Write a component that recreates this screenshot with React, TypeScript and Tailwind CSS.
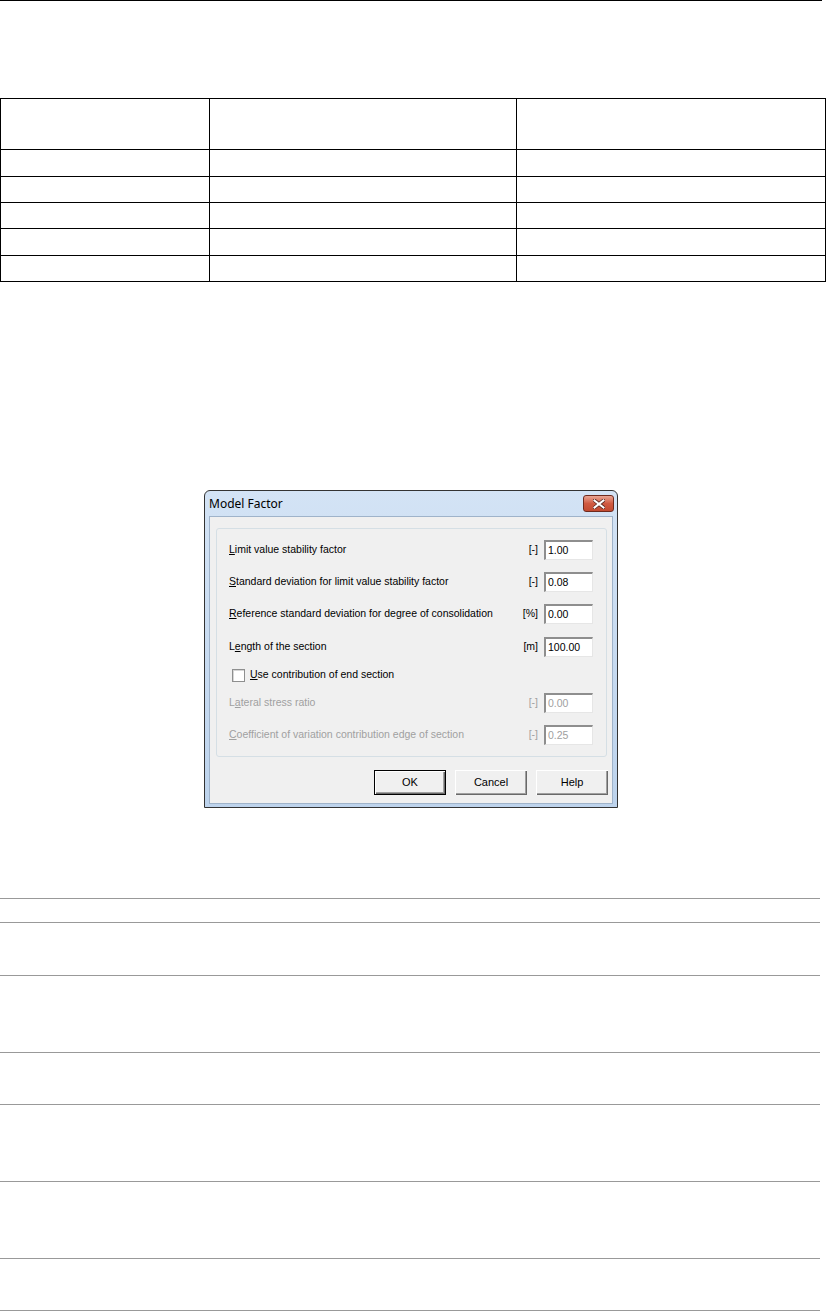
import React from "react";

const rows = [
  { label: "Limit value stability factor", key: "L", unit: "[-]", value: "1.00" },
  { label: "Standard deviation for limit value stability factor", key: "S", unit: "[-]", value: "0.08" },
  { label: "Reference standard deviation for degree of consolidation", key: "R", unit: "[%]", value: "0.00" },
  { label: "Length of the section", key: "e", unit: "[m]", value: "100.00" },
];

const disabledRows = [
  { label: "Lateral stress ratio", key: "a", unit: "[-]", value: "0.00" },
  { label: "Coefficient of variation contribution edge of section", key: "C", unit: "[-]", value: "0.25" },
];

// underline the mnemonic letter like a win32 label
function Mnemonic({ text, letter }: { text: string; letter: string }) {
  const i = text.indexOf(letter);
  if (i < 0) return <>{text}</>;
  return (
    <>
      {text.slice(0, i)}
      <span className="underline underline-offset-[1px]">{text[i]}</span>
      {text.slice(i + 1)}
    </>
  );
}

function Field({ label, letter, unit, value, disabled }: { label: string; letter: string; unit: string; value: string; disabled?: boolean }) {
  return (
    <div className={`flex items-center h-[20px] ${disabled ? "text-[#a0a0a0]" : "text-black"}`}>
      <span className="flex-1"><Mnemonic text={label} letter={letter} /></span>
      <span className="mr-[6px]">{unit}</span>
      <div className="w-[49px] h-[20px] bg-white border-t-2 border-l-2 border-t-[#8e8e8e] border-l-[#8e8e8e] border-r border-b border-r-[#e6e6e6] border-b-[#e6e6e6] flex items-center pl-[2px]">
        {value}
      </div>
    </div>
  );
}

function Button({ children, primary }: { children: React.ReactNode; primary?: boolean }) {
  return (
    <div className={`w-[72px] h-[25px] flex items-center justify-center bg-[#f0f0f0] ${primary ? "border border-black shadow-[inset_1px_1px_0_#fff,inset_-1px_-1px_0_#696969,inset_-2px_-2px_0_#a0a0a0]" : "shadow-[inset_1px_1px_0_#fff,inset_-1px_-1px_0_#696969,inset_-2px_-2px_0_#a0a0a0]"}`}>
      {children}
    </div>
  );
}

function ModelFactorDialog() {
  return (
    <div className="ml-[204px] w-[414px] h-[318px] border border-[#333] rounded-t-[6px] bg-gradient-to-b from-[#d3e3f5] to-[#bdd3ec] flex flex-col px-[4px] pb-[3px] overflow-hidden">
      <div className="h-[25px] flex items-start justify-between pt-[4px]">
        <span className="text-[12px] leading-[17px] text-black" style={{ fontFamily: '"Noto Sans", "Liberation Sans", sans-serif' }}>Model Factor</span>
        <div className="w-[31px] h-[17px] rounded-[3px] border border-[#6e2a1e] bg-gradient-to-b from-[#e8a493] via-[#d05a41] to-[#c24a30] flex items-center justify-center mr-[-1px]">
          <svg width="12" height="10" viewBox="0 0 12 10">
            <path d="M1.5 1.5 L10.5 8.5 M10.5 1.5 L1.5 8.5" stroke="#5a2a22" strokeWidth="3.6" strokeLinecap="square" />
            <path d="M1.5 1.5 L10.5 8.5 M10.5 1.5 L1.5 8.5" stroke="#fff" strokeWidth="2" strokeLinecap="square" />
          </svg>
        </div>
      </div>
      <div className="flex-1 bg-[#f0f0f0] border border-[#9fb3ca] pl-[6px] pr-[4px] pt-[11px] flex flex-col">
        <div className="mr-[1px] h-[229px] border border-[#d5dfe5] rounded-[3px] pl-[12px] pr-[13px] pt-[11px] pb-[11px] flex flex-col text-[10.5px]">
          <Field label={rows[0].label} letter={rows[0].key} unit={rows[0].unit} value={rows[0].value} />
          <div className="mt-[12px]"><Field label={rows[1].label} letter={rows[1].key} unit={rows[1].unit} value={rows[1].value} /></div>
          <div className="mt-[12px]"><Field label={rows[2].label} letter={rows[2].key} unit={rows[2].unit} value={rows[2].value} /></div>
          <div className="mt-[13px]"><Field label={rows[3].label} letter={rows[3].key} unit={rows[3].unit} value={rows[3].value} /></div>
          <div className="mt-[8px] h-[20px] flex items-center">
            <div className="ml-[3px] w-[13px] h-[13px] bg-white border border-[#8e8f8f] shadow-[inset_1px_1px_0_#d6d6d6]" />
            <span className="ml-[5px]"><Mnemonic text="Use contribution of end section" letter="U" /></span>
          </div>
          <div className="mt-[8px]"><Field label={disabledRows[0].label} letter={disabledRows[0].key} unit={disabledRows[0].unit} value={disabledRows[0].value} disabled /></div>
          <div className="mt-[12px]"><Field label={disabledRows[1].label} letter={disabledRows[1].key} unit={disabledRows[1].unit} value={disabledRows[1].value} disabled /></div>
        </div>
        <div className="mt-[13px] flex justify-end gap-[9px] text-[11px]">
          <Button primary>OK</Button>
          <Button>Cancel</Button>
          <Button>Help</Button>
        </div>
      </div>
    </div>
  );
}

export default function App() {
  const heights = ["h-[51px]", "h-[27px]", "h-[26px]", "h-[26px]", "h-[27px]", "h-[26px]"];
  return (
    <div className="w-[826px] h-[1311px] bg-white overflow-hidden" style={{ fontFamily: '"Liberation Sans", Arial, sans-serif' }}>
      <div className="h-px w-[822px] bg-black" />

      <div className="mt-[97px] w-[826px] border-t border-l border-black grid grid-cols-[209px_307px_309px]">
        {heights.map((h, r) =>
          [0, 1, 2].map((c) => <div key={r + "-" + c} className={`${h} border-r border-b border-black`} />)
        )}
      </div>

      <div className="mt-[208px]">
        <ModelFactorDialog />
      </div>

      <div className="mt-[90px] w-[820px] flex flex-col">
        <div className="h-px bg-[#999]" />
        <div className="mt-[23px] h-px bg-[#999]" />
        <div className="mt-[52px] h-px bg-[#999]" />
        <div className="mt-[76px] h-px bg-[#999]" />
        <div className="mt-[51px] h-px bg-[#999]" />
        <div className="mt-[76px] h-px bg-[#999]" />
        <div className="mt-[76px] h-px bg-[#999]" />
        <div className="mt-[51px] h-px bg-[#999]" />
      </div>
    </div>
  );
}
